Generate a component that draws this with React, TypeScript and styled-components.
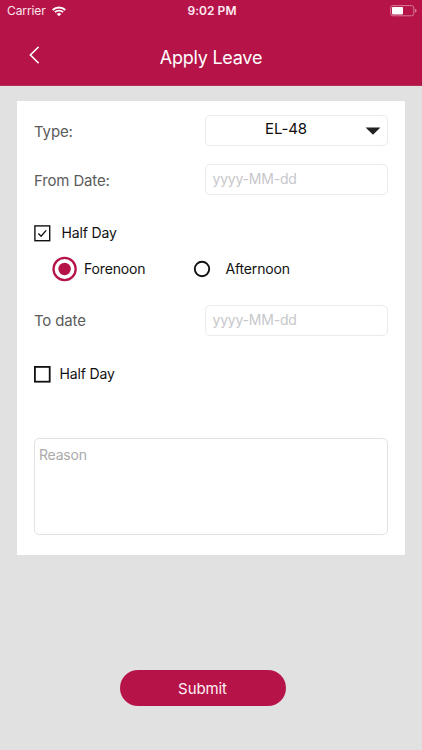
import React, { useState } from "react";
import styled, { createGlobalStyle } from "styled-components";

const crimson = "#b61449";

const GlobalStyle = createGlobalStyle`
  * { box-sizing: border-box; }
  body {
    margin: 0;
    background: #e1e1e1;
    font-family: Inter, "Liberation Sans", sans-serif;
  }
  button { font-family: inherit; border: 0; padding: 0; margin: 0; background: none; cursor: pointer; }
`;

const Screen = styled.div`
  width: 422px;
  height: 750px;
  display: flex;
  flex-direction: column;
  background: #e1e1e1;
  overflow: hidden;
`;

const Header = styled.header`
  height: 86px;
  flex: none;
  background: ${crimson};
  color: #fff;
  border-bottom: 1px solid #b52d5a;
`;

const StatusBar = styled.div`
  height: 22px;
  display: grid;
  grid-template-columns: 1fr auto 1fr;
  align-items: center;
  padding: 0 5px 0 7px;
`;

const Carrier = styled.div`
  display: flex;
  align-items: center;
  gap: 6px;
  font-size: 12px;
  line-height: 22px;
  letter-spacing: -0.1px;
  color: #fbe6ee;
`;

const Clock = styled.div`
  font-size: 12px;
  line-height: 22px;
  font-weight: 600;
  letter-spacing: 0.05px;
  color: #fdeaf1;
`;

const Battery = styled.svg`
  justify-self: end;
  display: block;
`;

const NavBar = styled.div`
  height: 63px;
  display: grid;
  grid-template-columns: 70px 1fr 70px;
  align-items: center;
  padding-bottom: 3px;
`;

const BackButton = styled.button`
  display: flex;
  padding-left: 29px;
  padding-top: 6px;
`;

const Title = styled.h1`
  margin: 0;
  padding-top: 12px;
  text-align: center;
  font-size: 18px;
  line-height: 24px;
  font-weight: 400;
  letter-spacing: -0.25px;
`;

const Card = styled.main`
  width: 388.5px;
  height: 454px;
  flex: none;
  margin: 15px 0 0 16.5px;
  padding: 14px 17px 0 17.5px;
  background: #fff;
`;

const FieldRow = styled.div<{ $top?: number }>`
  height: 31px;
  margin-top: ${(p) => p.$top ?? 0}px;
  display: flex;
  align-items: center;
  justify-content: space-between;
`;

const Label = styled.span<{ $drop?: number }>`
  font-size: 15px;
  line-height: 20px;
  padding-top: ${(p) => p.$drop ?? 2}px;
  color: #5c5c5c;
  letter-spacing: -0.15px;
`;

const Field = styled.div`
  width: 183px;
  height: 31px;
  border: 1px solid #ebebeb;
  border-radius: 5px;
  display: flex;
  align-items: center;
`;

const SelectValue = styled.span`
  flex: 1;
  padding: 0 0 3px 16px;
  text-align: center;
  font-size: 15px;
  line-height: 20px;
  letter-spacing: -0.15px;
  color: #0c0c0c;
`;

const Caret = styled.svg`
  flex: none;
  margin: 1px 6px 0 15px;
`;

const Placeholder = styled.span`
  padding: 0 0 1px 6.5px;
  font-size: 14px;
  line-height: 20px;
  letter-spacing: -0.2px;
  color: #c7c7cb;
`;

const OptionRow = styled.div<{ $top: number; $indent?: number; $height: number }>`
  height: ${(p) => p.$height}px;
  margin-top: ${(p) => p.$top}px;
  padding-left: ${(p) => p.$indent ?? 0}px;
  display: flex;
  align-items: center;
`;

const Option = styled.button<{ $gap: number; $width?: number }>`
  display: flex;
  align-items: center;
  gap: ${(p) => p.$gap}px;
  width: ${(p) => (p.$width ? `${p.$width}px` : "auto")};
`;

const OptionText = styled.span`
  font-size: 14px;
  line-height: 20px;
  color: #111;
  letter-spacing: -0.15px;
`;

const Glyph = styled.svg`
  display: block;
  flex: none;
`;

const Reason = styled.div`
  margin-top: 54px;
  width: 354px;
  height: 97px;
  padding: 6px 4px;
  border: 1px solid #e2e2e2;
  border-radius: 5px;
  font-size: 14px;
  line-height: 20px;
  letter-spacing: -0.2px;
  color: #aaa;
`;

const Submit = styled.button`
  && {
    width: 166px;
    height: 36px;
    flex: none;
    margin: 115px 0 0 119.5px;
    border-radius: 18px;
    background: ${crimson};
    color: #fff1f6;
    font-size: 15px;
    line-height: 36px;
    padding-top: 1px;
    letter-spacing: -0.1px;
  }
`;

function Checkbox({ checked }: { checked: boolean }) {
  return (
    <Glyph width="17" height="17" viewBox="0 0 17 17" fill="none" stroke="#111">
      <rect x="0.9" y="0.9" width="14.8" height="14.8" strokeWidth={checked ? 1.4 : 1.8} />
      {checked && <path d="M4.4 8.6 7.1 11.2 12.2 5.4" strokeWidth="1.4" />}
    </Glyph>
  );
}

function Radio({ selected }: { selected: boolean }) {
  return (
    <Glyph width="26" height="26" viewBox="0 0 26 26" fill="none">
      {selected ? (
        <>
          <circle cx="12.6" cy="13" r="11.1" stroke={crimson} strokeWidth="2.3" />
          <circle cx="12.6" cy="13" r="6.2" fill={crimson} />
        </>
      ) : (
        <circle cx="13" cy="13" r="7.2" stroke="#111" strokeWidth="1.9" />
      )}
    </Glyph>
  );
}

export default function App() {
  const [fromHalf, setFromHalf] = useState(true);
  const [toHalf, setToHalf] = useState(false);
  const [session, setSession] = useState<"am" | "pm">("am");

  return (
    <>
      <GlobalStyle />
      <Screen>
        <Header>
          <StatusBar>
            <Carrier>
              Carrier
              <svg width="14" height="11" viewBox="0 0 14 11" fill="none" stroke="#fff">
                <path d="M0.7 4A9 9 0 0 1 13.3 4" strokeWidth="1.9" />
                <path d="M2.9 6.2A5.9 5.9 0 0 1 11.1 6.2" strokeWidth="1.8" />
                <path d="M4.7 8A3.3 3.3 0 0 1 9.3 8L7 10.3Z" fill="#fff" stroke="none" />
              </svg>
            </Carrier>
            <Clock>9:02 PM</Clock>
            <Battery width="27" height="12" viewBox="0 0 27 12" fill="none">
              <rect x="0.6" y="0.6" width="23.2" height="10.2" rx="2.4" stroke="#d87997" strokeWidth="1" />
              <rect x="2" y="2" width="11" height="7.4" rx="0.8" fill="#fff" />
              <path d="M25 3.8Q26.6 4.4 26.6 5.7T25 7.6Z" fill="#d87997" />
            </Battery>
          </StatusBar>
          <NavBar>
            <BackButton aria-label="Back">
              <svg width="11" height="18" viewBox="0 0 11 18" fill="none" stroke="#fff" strokeWidth="1.6" strokeLinecap="round">
                <path d="M9.2 1.3 1.4 9 9.2 16.7" />
              </svg>
            </BackButton>
            <Title>Apply Leave</Title>
          </NavBar>
        </Header>

        <Card>
          <FieldRow>
            <Label>Type:</Label>
            <Field>
              <SelectValue>EL-48</SelectValue>
              <Caret width="16" height="8" viewBox="0 0 16 8">
                <path d="M0.6 0.4H15.4L8 7.8Z" fill="#222" />
              </Caret>
            </Field>
          </FieldRow>
          <FieldRow $top={18}>
            <Label>From Date:</Label>
            <Field>
              <Placeholder>yyyy-MM-dd</Placeholder>
            </Field>
          </FieldRow>
          <OptionRow $top={28} $height={20}>
            <Option $gap={10.5} role="checkbox" aria-checked={fromHalf} onClick={() => setFromHalf(!fromHalf)}>
              <Checkbox checked={fromHalf} />
              <OptionText>Half Day</OptionText>
            </Option>
          </OptionRow>
          <OptionRow $top={13} $height={26} $indent={17.5}>
            <Option $gap={6.5} $width={137} role="radio" aria-checked={session === "am"} onClick={() => setSession("am")}>
              <Radio selected={session === "am"} />
              <OptionText>Forenoon</OptionText>
            </Option>
            <Option $gap={11} role="radio" aria-checked={session === "pm"} onClick={() => setSession("pm")}>
              <Radio selected={session === "pm"} />
              <OptionText>Afternoon</OptionText>
            </Option>
          </OptionRow>
          <FieldRow $top={23}>
            <Label $drop={0}>To date</Label>
            <Field>
              <Placeholder>yyyy-MM-dd</Placeholder>
            </Field>
          </FieldRow>
          <OptionRow $top={28} $height={20}>
            <Option $gap={8.5} role="checkbox" aria-checked={toHalf} onClick={() => setToHalf(!toHalf)}>
              <Checkbox checked={toHalf} />
              <OptionText>Half Day</OptionText>
            </Option>
          </OptionRow>
          <Reason>Reason</Reason>
        </Card>

        <Submit>Submit</Submit>
      </Screen>
    </>
  );
}
